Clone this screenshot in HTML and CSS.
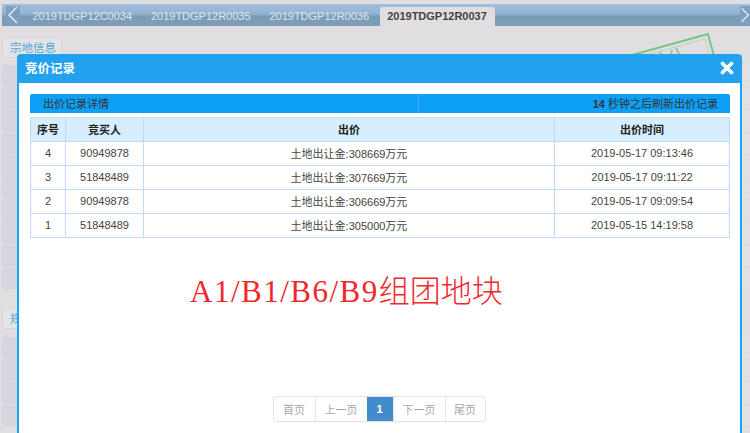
FILE: index.html
```html
<!DOCTYPE html>
<html lang="zh">
<head>
<meta charset="utf-8">
<title>竞价记录</title>
<link rel="stylesheet" href="styles.css">
</head>
<body>
<div class="tabbar">
  <span class="arrow"><svg width="12" height="18" viewBox="0 0 12 18"><path d="M10 1 2 9l8 8" fill="none" stroke="#dfe8f0" stroke-width="1.6"/></svg></span>
  <div class="tabs">
    <span class="tab">2019TDGP12C0034</span>
    <span class="tab">2019TDGP12R0035</span>
    <span class="tab">2019TDGP12R0036</span>
    <span class="tab active">2019TDGP12R0037</span>
  </div>
  <span class="arrow right"><svg width="12" height="18" viewBox="0 0 12 18"><path d="M2 1l8 8-8 8" fill="none" stroke="#dfe8f0" stroke-width="1.6"/></svg></span>
</div>
<div class="page">
  <div class="pill">宗地信息</div>
  <div class="bgrows first"><i></i><i></i><i></i><i></i><i></i><i></i><i></i><i></i><i></i><i></i></div>
  <div class="pill">规划信息</div>
  <div class="bgrows"><i></i><i></i><i></i><i></i></div>
</div>
<svg class="stamp" width="110" height="60" viewBox="0 0 110 60"><path d="M6 30 100 4l8 30" fill="none" stroke="#7cc47f" stroke-width="2"/><path d="M12 32 97 9l6 24" fill="none" stroke="#b5d6b5" stroke-width="1"/><path d="M52 22l4 8M64 20l-2 8M68 18l4 8" stroke="#8fca8f" stroke-width="2" fill="none"/></svg>
<section class="modal">
  <header class="modal-head">
    <h1>竞价记录</h1>
    <svg class="close" width="14" height="14" viewBox="0 0 14 14"><path d="M2.5 2.5l9 9M11.5 2.5l-9 9" stroke="#fff" stroke-width="3.6" stroke-linecap="round"/></svg>
  </header>
  <div class="modal-body">
    <div class="infobar">
      <div class="info-l">出价记录详情</div>
      <div class="info-r"><b>14</b> 秒钟之后刷新出价记录</div>
    </div>
    <table>
      <thead>
        <tr><th class="c1">序号</th><th class="c2">竞买人</th><th>出价</th><th class="c4">出价时间</th></tr>
      </thead>
      <tbody>
        <tr><td>4</td><td>90949878</td><td>土地出让金:308669万元</td><td>2019-05-17 09:13:46</td></tr>
        <tr><td>3</td><td>51848489</td><td>土地出让金:307669万元</td><td>2019-05-17 09:11:22</td></tr>
        <tr><td>2</td><td>90949878</td><td>土地出让金:306669万元</td><td>2019-05-17 09:09:54</td></tr>
        <tr><td>1</td><td>51848489</td><td>土地出让金:305000万元</td><td>2019-05-15 14:19:58</td></tr>
      </tbody>
    </table>
    <div class="note">A1/B1/B6/B9<span>组团地块</span></div>
    <nav class="pager">
      <a class="p-end">首页</a><a class="p-mid">上一页</a><a class="on">1</a><a class="p-mid">下一页</a><a class="p-end">尾页</a>
    </nav>
  </div>
</section>
</body>
</html>
```
FILE: styles.css
```css
* { box-sizing: border-box; }
html, body { margin: 0; height: 433px; overflow: hidden; }
body {
  background: #e1dee1;
  font-family: "Liberation Sans", "Noto Sans CJK SC", sans-serif;
  font-size: 12px;
  color: #333;
  padding-top: 4px;
  position: relative;
}
.tabbar {
  height: 22px;
  margin: 0 0 0 2px;
  display: flex;
  background: linear-gradient(#a2bfdd, #93b3d2 45%, #7b9cb7 55%, #7d9db8);
}
.arrow {
  width: 14px;
  height: 18px;
  margin-top: 2px;
  margin-left: 4px;
  background: #7f9fc0;
  display: flex;
  align-items: center;
  justify-content: center;
}
.arrow.right { margin-left: 0; width: 10px; justify-content: flex-start; }
.tabs { flex: 1; display: flex; padding-left: 3px; align-items: flex-end; }
.tab {
  width: 118.5px;
  height: 19px;
  line-height: 19px;
  text-align: center;
  font-size: 11px;
  color: #dde6ee;
}
.tab.active {
  width: 115px;
  margin-left: 1px;
  background: #e1dee1;
  color: #444;
  font-weight: bold;
  border-radius: 3px 3px 0 0;
}
.page { padding: 11px 0 0 2px; }
.pill {
  width: 60px;
  height: 21px;
  line-height: 20px;
  padding-left: 7px;
  font-size: 11.5px;
  color: #4ea6d8;
  background: #e6e3e6;
  border: 1px solid #d8d6d8;
  border-radius: 3px;
}
.bgrows { margin: 8px 0 0; }
.bgrows.first { margin: 7px 0 18px; }
.bgrows i {
  display: block;
  height: 22.5px;
  background: linear-gradient(90deg, #d6d6df 16px, #e3e0e3 16px);
  border-bottom: 1px solid #dbdbe2;
}
.stamp { position: absolute; left: 608px; top: 30px; }
.modal {
  position: absolute;
  left: 17px;
  top: 54px;
  width: 725px;
  height: 379px;
  background: linear-gradient(#22a2ee 29px, #14a6fb 29px);
  border-radius: 4px 4px 0 0;
  padding: 0 2px;
  display: flex;
  flex-direction: column;
}
.modal-head {
  height: 29px;
  display: flex;
  align-items: center;
  justify-content: space-between;
  padding: 0 6px 2px 6px;
  flex: none;
}
.modal-head h1 { margin: 0; font-size: 12.5px; font-weight: bold; color: #fff; }
.close { margin-top: 1px; }
.modal-body {
  flex: 1;
  background: #fff;
  padding: 11px 10px 0 11px;
  display: flex;
  flex-direction: column;
}
.infobar {
  height: 19px;
  display: flex;
  background: #0ea0f7;
  line-height: 20px;
  font-size: 11px;
  color: #333;
  border-radius: 2px 2px 0 0;
}
.info-l { width: 389px; padding-left: 13px; border-right: 1px solid #3fb4f7; }
.info-r { flex: 1; text-align: right; padding-right: 12px; }
table {
  margin-top: 4px;
  width: 700px;
  border-collapse: collapse;
  table-layout: fixed;
  font-size: 11px;
  color: #444;
}
th, td { border: 1px solid #bfdbfb; text-align: center; padding: 0 0 2px; height: 24px; }
th { background: #d7eeff; font-size: 11px; color: #222; }
.c1 { width: 35px; }
.c2 { width: 78px; }
.c4 { width: 175px; }
.note {
  margin: 32px 0 0 160px;
  height: 64px;
  font-family: "Liberation Serif", "Noto Sans CJK SC", serif;
  font-size: 31px;
  letter-spacing: 1.5px;
  line-height: 44px;
  color: #f0282c;
}
.note span { letter-spacing: 0; font-weight: 300; }
.pager {
  align-self: center;
  display: flex;
  margin: 62px 2px 0 0;
  height: 26px;
  border: 1px solid #e2e2e2;
  border-radius: 4px;
  color: #a8a8a8;
  font-size: 11px;
}
.pager a { display: flex; align-items: center; justify-content: center; border-left: 1px solid #e6e6e6; }
.pager .p-end { width: 41px; }
.pager .p-end:first-child { border-left: 0; }
.pager .p-end:last-child { width: 40px; }
.pager .p-mid { width: 52px; }
.pager a.on { width: 26px; background: #428bca; color: #fff; font-weight: bold; border-left: 0; }
```
